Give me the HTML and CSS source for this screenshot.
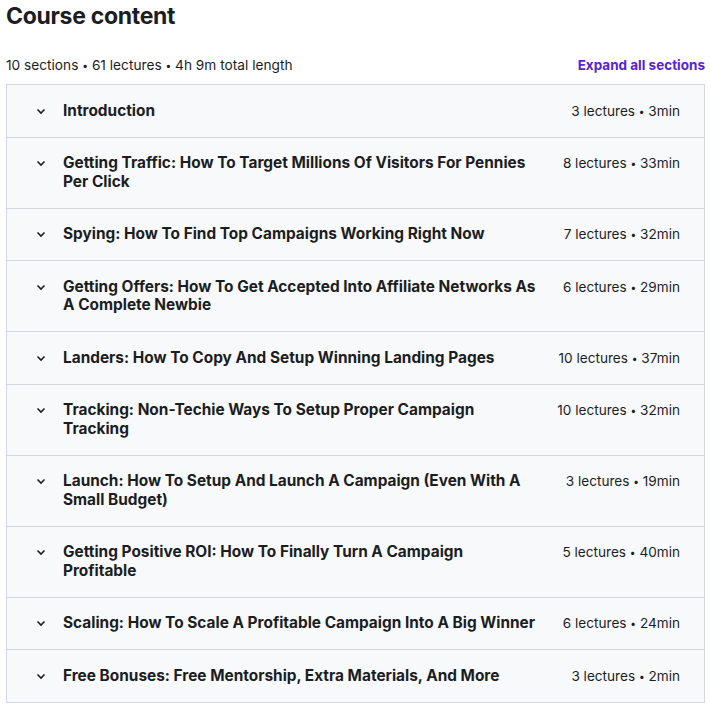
FILE: index.html
```html
<!DOCTYPE html>
<html lang="en">
<head>
    <meta charset="UTF-8">
    <meta name="viewport" content="width=device-width, initial-scale=1.0">
    <title>Course content</title>
    <link rel="stylesheet" href="styles.css">
</head>
<body>

    <h2 class="title">Course content</h2>

    <!-- Resumo do curso -->
    <div class="summary">
        <span>10 sections <span class="dot">•</span> 61 lectures <span class="dot">•</span> 4h 9m total length</span>
        <a href="#" class="expand">Expand all sections</a>
    </div>

    <div class="sections">
        <div class="section">
            <span class="chevron"><svg viewBox="0 0 12 12"><path d="M2.5 4.5 6 8l3.5-3.5"/></svg></span>
            <span class="name">Introduction</span>
            <span class="meta">3 lectures <span class="dot">•</span> 3min</span>
        </div>
        <div class="section">
            <span class="chevron"><svg viewBox="0 0 12 12"><path d="M2.5 4.5 6 8l3.5-3.5"/></svg></span>
            <span class="name">Getting Traffic: How To Target Millions Of Visitors For Pennies Per Click</span>
            <span class="meta">8 lectures <span class="dot">•</span> 33min</span>
        </div>
        <div class="section">
            <span class="chevron"><svg viewBox="0 0 12 12"><path d="M2.5 4.5 6 8l3.5-3.5"/></svg></span>
            <span class="name">Spying: How To Find Top Campaigns Working Right Now</span>
            <span class="meta">7 lectures <span class="dot">•</span> 32min</span>
        </div>
        <div class="section">
            <span class="chevron"><svg viewBox="0 0 12 12"><path d="M2.5 4.5 6 8l3.5-3.5"/></svg></span>
            <span class="name">Getting Offers: How To Get Accepted Into Affiliate Networks As A Complete Newbie</span>
            <span class="meta">6 lectures <span class="dot">•</span> 29min</span>
        </div>
        <div class="section">
            <span class="chevron"><svg viewBox="0 0 12 12"><path d="M2.5 4.5 6 8l3.5-3.5"/></svg></span>
            <span class="name">Landers: How To Copy And Setup Winning Landing Pages</span>
            <span class="meta">10 lectures <span class="dot">•</span> 37min</span>
        </div>
        <div class="section">
            <span class="chevron"><svg viewBox="0 0 12 12"><path d="M2.5 4.5 6 8l3.5-3.5"/></svg></span>
            <span class="name">Tracking: Non-Techie Ways To Setup Proper Campaign Tracking</span>
            <span class="meta">10 lectures <span class="dot">•</span> 32min</span>
        </div>
        <div class="section">
            <span class="chevron"><svg viewBox="0 0 12 12"><path d="M2.5 4.5 6 8l3.5-3.5"/></svg></span>
            <span class="name">Launch: How To Setup And Launch A Campaign (Even With A Small Budget)</span>
            <span class="meta">3 lectures <span class="dot">•</span> 19min</span>
        </div>
        <div class="section">
            <span class="chevron"><svg viewBox="0 0 12 12"><path d="M2.5 4.5 6 8l3.5-3.5"/></svg></span>
            <span class="name">Getting Positive ROI: How To Finally Turn A Campaign Profitable</span>
            <span class="meta">5 lectures <span class="dot">•</span> 40min</span>
        </div>
        <div class="section">
            <span class="chevron"><svg viewBox="0 0 12 12"><path d="M2.5 4.5 6 8l3.5-3.5"/></svg></span>
            <span class="name">Scaling: How To Scale A Profitable Campaign Into A Big Winner</span>
            <span class="meta">6 lectures <span class="dot">•</span> 24min</span>
        </div>
        <div class="section">
            <span class="chevron"><svg viewBox="0 0 12 12"><path d="M2.5 4.5 6 8l3.5-3.5"/></svg></span>
            <span class="name">Free Bonuses: Free Mentorship, Extra Materials, And More</span>
            <span class="meta">3 lectures <span class="dot">•</span> 2min</span>
        </div>
    </div>

</body>
</html>
```

FILE: styles.css
```css
body {
    font-family: Inter, "Noto Sans", sans-serif;
    margin: 0;
    padding: 0 6px;
    background: #fff;
    color: #1c1d1f;
}

.title {
    font-size: 23px;
    font-weight: 700;
    margin: 2px 0 0;
    line-height: 28px;
    letter-spacing: -0.3px;
}

.summary {
    display: flex;
    justify-content: space-between;
    align-items: center;
    margin-top: 26px;
    margin-bottom: 10px;
    font-size: 13.7px;
    line-height: 18px;
}

.dot {
    font-size: 0.75em;
    vertical-align: 1px;
}

.expand {
    color: #5624d0;
    font-weight: 700;
    font-size: 13.5px;
    text-decoration: none;
}

.sections {
    border: 1px solid #d1d7dc;
    border-bottom: none;
}

.section {
    display: flex;
    align-items: flex-start;
    background: #f7f9fa;
    border-bottom: 1px solid #d1d7dc;
    padding: 16.5px 24px 16.5px 28px;
    font-size: 15.4px;
    line-height: 18.5px;
}

.chevron {
    width: 12px;
    height: 18.5px;
    display: flex;
    align-items: center;
    margin-right: 16px;
    flex-shrink: 0;
}

.chevron svg {
    width: 12px;
    height: 12px;
    fill: none;
    stroke: #1c1d1f;
    stroke-width: 1.6;
}

.name {
    flex: 1;
    max-width: 475px;
    font-weight: 700;
    padding-right: 20px;
}

.meta {
    margin-left: auto;
    font-size: 13.6px;
    white-space: nowrap;
}
```
